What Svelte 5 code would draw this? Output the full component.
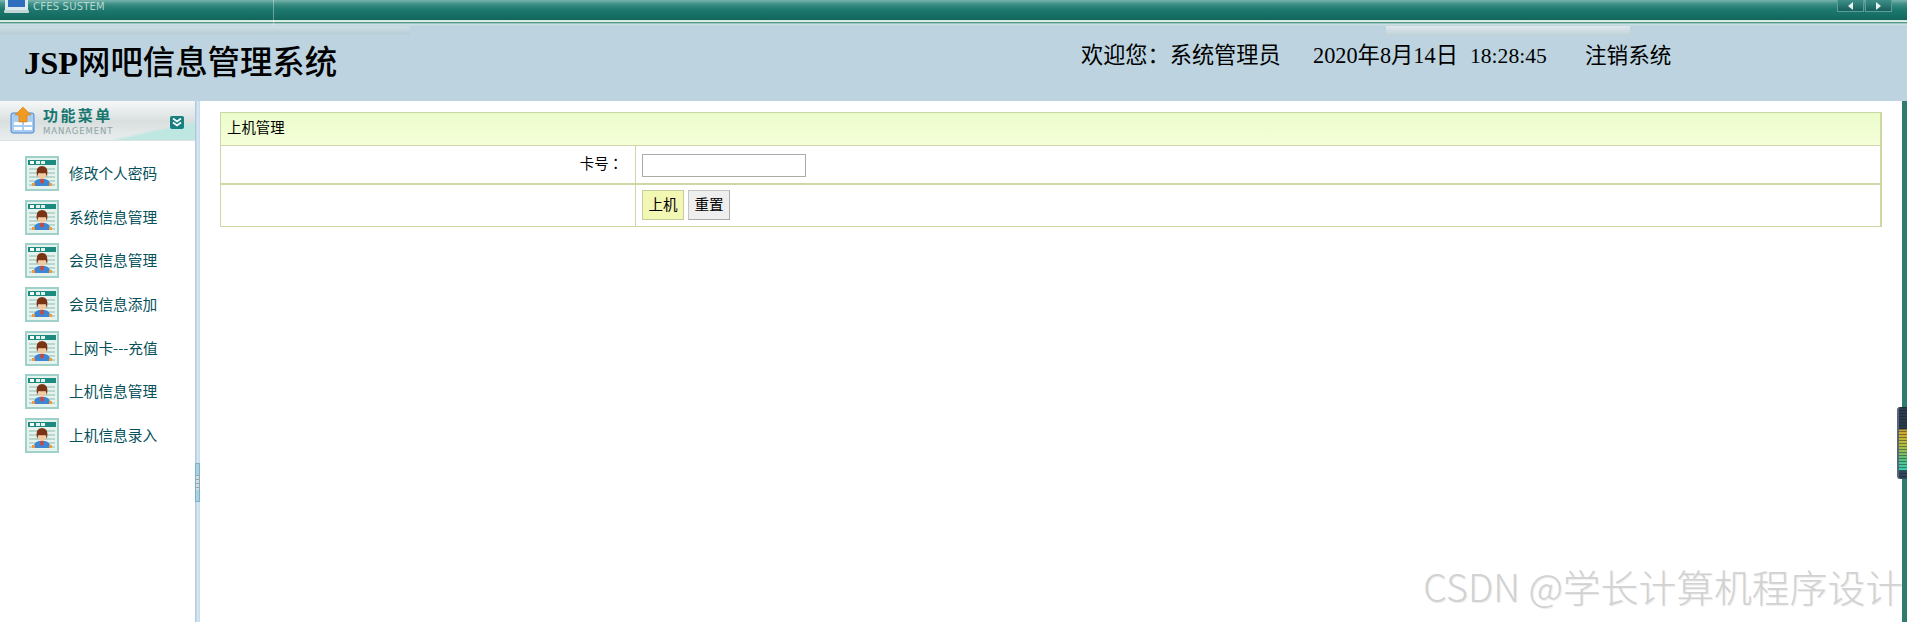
<script>
  const menu = ['修改个人密码', '系统信息管理', '会员信息管理', '会员信息添加', '上网卡---充值', '上机信息管理', '上机信息录入'];
</script>

<div class="page">
  <div class="topbar">
    <svg class="monitor" width="26" height="14" viewBox="0 0 26 14">
      <rect x="1" y="-8" width="23" height="18" fill="#dbe9ec" />
      <rect x="4" y="-6" width="17" height="13" fill="#2f6fc0" />
      <rect x="0" y="10" width="25" height="3" rx="1" fill="#c3d6d8" />
    </svg>
    <span class="sys">CFES SUSTEM</span>
    <i class="vline"></i>
    <div class="arrows">
      <span class="arrow"><b class="left"></b></span>
      <span class="arrow"><b class="right"></b></span>
    </div>
  </div>
  <div class="stripes"></div>

  <header>
    <i class="glare-left"></i>
    <h1><b>JSP</b>网吧信息管理系统</h1>
    <i class="glare"></i>
    <div class="info">
      <span class="welcome">欢迎您：系统管理员</span>
      <span class="date">2020年8月14日</span>
      <span class="time">18:28:45</span>
      <span class="logout">注销系统</span>
    </div>
  </header>

  <div class="body">
    <aside>
      <div class="side-head">
        <svg width="25" height="28" viewBox="0 0 25 28">
          <rect x="1" y="6" width="23" height="20" rx="2" fill="#a9cdf0" stroke="#4a86d0" />
          <rect x="4" y="15" width="8" height="3" fill="#fff" />
          <rect x="14" y="15" width="8" height="3" fill="#fff" />
          <rect x="4" y="20" width="8" height="3" fill="#fff" />
          <rect x="14" y="20" width="8" height="3" fill="#fff" />
          <path d="M13 0 L21 8 H17 V15 H9 V8 H5 Z" fill="#f09a22" stroke="#d97a10" stroke-width=".6" />
        </svg>
        <div class="side-title">
          <strong>功能菜单</strong>
          <span>MANAGEMENT</span>
        </div>
        <svg class="collapse" width="14" height="13" viewBox="0 0 14 13">
          <rect width="14" height="13" rx="2" fill="#167f80" />
          <path d="M3 2.5 L7 5.5 L11 2.5 M3 6.5 L7 9.5 L11 6.5" fill="none" stroke="#fff" stroke-width="1.6" />
        </svg>
      </div>
      <ul>
        {#each menu as item}
          <li>
            <svg width="34" height="35" viewBox="0 0 34 35">
              <rect x="1" y="1" width="32" height="33" fill="#e6f2ee" stroke="#a0d0ca" stroke-width="2" />
              <rect x="3" y="4" width="28" height="5" fill="#1d8a80" />
              <rect x="5" y="5" width="4" height="3" fill="#fff" />
              <rect x="11" y="5" width="4" height="3" fill="#e4f2ef" />
              <rect x="16" y="5" width="4" height="3" fill="#e4f2ef" />
              <path d="M4 13 H30 M4 17 H30 M4 21 H30 M4 25 H30 M4 29 H30" stroke="#a9d0c4" stroke-width="1.5" />
              <path d="M8 30 Q9 24 14 23 H20 Q25 24 26 30 Z" fill="#3c86d4" />
              <rect x="7" y="27" width="3" height="3" fill="#ef9a3c" />
              <rect x="24" y="27" width="3" height="3" fill="#ef9a3c" />
              <path d="M16 22 L18 22 L19 26 L17 28 L15 26 Z" fill="#d0453a" />
              <ellipse cx="17" cy="19" rx="3.8" ry="4" fill="#f3c9a0" />
              <path d="M12 21 Q10 10 17 10 Q24 10 22 21 L20.5 17 Q17 17.5 13.5 17 Z" fill="#7a3315" />
            </svg>
            <span>{item}</span>
          </li>
        {/each}
      </ul>
    </aside>

    <div class="splitter"><i></i></div>

    <main>
      <div class="panel">
        <div class="panel-title">上机管理</div>
        <div class="row first">
          <label class="cell-left" for="card">卡号：</label>
          <div class="cell-right"><input id="card" type="text" /></div>
        </div>
        <div class="row second">
          <div class="cell-left"></div>
          <div class="cell-right">
            <button class="primary">上机</button>
            <button>重置</button>
          </div>
        </div>
      </div>
    </main>

    <div class="edge"></div>
  </div>

  <div class="widget"></div>
  <div class="watermark">CSDN @学长计算机程序设计</div>
</div>

<style>
  :global(body) {
    margin: 0;
    background: #fff;
    overflow: hidden;
  }

  .page {
    position: relative;
    height: 622px;
    display: flex;
    flex-direction: column;
    font-family: "Liberation Serif", "Noto Sans CJK SC", serif;
    overflow: hidden;
  }

  .topbar {
    position: relative;
    height: 20px;
    display: flex;
    align-items: flex-start;
    background: linear-gradient(#79b5ae 0, #3f8f86 4px, #1f7a70 9px, #11665b 20px);
  }

  .monitor {
    margin-left: 4px;
  }

  .sys {
    margin-left: 3px;
    font: 10px/13px "DejaVu Sans", sans-serif;
    letter-spacing: 0.2px;
    color: #b5d8d0;
  }

  .vline {
    position: absolute;
    left: 273px;
    top: 0;
    width: 1px;
    height: 26px;
    background: rgba(255, 255, 255, 0.35);
  }

  .arrows {
    position: absolute;
    right: 15px;
    top: 0;
    display: flex;
    gap: 1px;
    height: 12px;
  }

  .arrow {
    width: 27px;
    display: flex;
    align-items: center;
    justify-content: center;
    background: linear-gradient(#3f8f88, #175f5c);
    border: 1px solid #5b9f97;
    border-top: 0;
    box-sizing: border-box;
  }

  .arrow b {
    width: 0;
    height: 0;
    border-top: 4px solid transparent;
    border-bottom: 4px solid transparent;
  }

  .left {
    border-right: 5px solid #e6f2f0;
  }

  .right {
    border-left: 5px solid #e6f2f0;
  }

  .stripes {
    height: 6px;
    background: linear-gradient(#cfe6dc 0, #e4f1e8 2px, #3e8a80 2px, #6ea79f 3px, #d0e2e2 4px, #bdd4e0 6px);
  }

  header {
    position: relative;
    height: 75px;
    flex: none;
    background: #bdd4e0;
  }

  .glare-left {
    position: absolute;
    left: 0;
    top: 0;
    width: 410px;
    height: 9px;
    background: linear-gradient(#cddde5, #b9cdd6 90%, #bdd4e0);
  }

  h1 {
    position: absolute;
    left: 24px;
    top: 17px;
    margin: 0;
    font-size: 32.4px;
    line-height: 40px;
    font-weight: 500;
    color: #000;
    white-space: nowrap;
  }

  .glare {
    position: absolute;
    left: 1386px;
    top: 0;
    width: 244px;
    height: 10px;
    background: linear-gradient(#dfe8ec, #bdd0d8);
  }

  .info {
    position: absolute;
    left: 0;
    top: 16px;
    width: 100%;
    height: 28px;
    font-size: 21.6px;
    line-height: 28px;
    color: #000;
  }

  .info span {
    position: absolute;
    white-space: nowrap;
  }

  .welcome { left: 1081px; font-size: 22.2px; }
  .date { left: 1313px; font-size: 22.3px; }
  .time { left: 1470px; font-size: 21.6px; }
  .logout { left: 1585px; }

  .body {
    flex: 1;
    display: flex;
    min-height: 0;
  }

  aside {
    width: 195px;
    flex: none;
  }

  .side-head {
    height: 39px;
    display: flex;
    align-items: center;
    padding-left: 10px;
    border-bottom: 1px solid #dde3e3;
    background:
      linear-gradient(167.6deg, transparent 76%, #bfe7e1 80%),
      linear-gradient(#f7f8f8, #d9dfdf 52%, #e9eded);
    position: relative;
  }

  .side-title {
    margin-left: 8px;
    display: flex;
    flex-direction: column;
  }

  .side-title strong {
    font: bold 15px/18px "Noto Sans CJK SC", sans-serif;
    letter-spacing: 2.4px;
    color: #17776f;
  }

  .side-title span {
    margin-top: 3px;
    font: 8.5px/9px "DejaVu Sans", sans-serif;
    letter-spacing: 0.9px;
    color: #8fa3a3;
  }

  .collapse {
    position: absolute;
    left: 170px;
    top: 15px;
  }

  ul {
    list-style: none;
    margin: 0;
    padding: 15px 0 0 25px;
  }

  li {
    height: 43.7px;
    display: flex;
    align-items: flex-start;
    gap: 10px;
  }

  li span {
    font: 14.7px/34px "Noto Sans CJK SC", sans-serif;
    color: #05505a;
  }

  .splitter {
    position: relative;
    width: 5px;
    flex: none;
    background: linear-gradient(90deg, #a9c2d4, #d6e7f3 50%, #c4dcec);
  }

  .splitter i {
    position: absolute;
    left: 0;
    top: 362px;
    width: 5px;
    height: 39px;
    box-sizing: border-box;
    border: 1px solid #7fb0c4;
    background:
      repeating-linear-gradient(#9aa8ac 0 1px, #d4dcde 1px 4px) center / 100% 15px no-repeat,
      #a6d2e4;
  }

  main {
    flex: 1;
    min-width: 0;
    padding: 11px 20px 0 20px;
  }

  .panel {
    border: 1px solid #cdd8a6;
    border-width: 1px 2px 1px 1px;
    font: 13.4px "Noto Sans CJK SC", sans-serif;
    color: #000;
  }

  .panel-title {
    height: 32px;
    padding-left: 6px;
    font-size: 14.4px;
    line-height: 28px;
    background: linear-gradient(#ebfccb, #f5fed9);
    border-bottom: 1px solid #cdd8a6;
  }

  .row {
    display: flex;
  }

  .row.first {
    height: 37px;
    border-bottom: 2px solid #cdd8a6;
  }

  .row.second {
    height: 41px;
  }

  .cell-left {
    width: 415px;
    flex: none;
    padding-right: 12px;
    box-sizing: border-box;
    text-align: right;
    font-size: 14.4px;
    line-height: 33px;
    font-family: "Noto Sans CJK TC", sans-serif;
    border-right: 1px solid #cdd8a6;
  }

  .cell-right {
    flex: 1;
    padding: 5px 0 0 6px;
    display: flex;
    gap: 4px;
  }

  input {
    width: 164px;
    height: 23px;
    box-sizing: border-box;
    margin: 3px 0 0;
    border: 1.4px solid #ababab;
    background: #fff;
    padding: 0;
  }

  button {
    width: 42px;
    height: 30px;
    padding: 0 0 4px;
    box-sizing: border-box;
    border: 1px solid #c4c4c4;
    border-bottom-color: #aaa;
    border-right-color: #aaa;
    background: #eeeeee;
    font: 14.6px "Noto Sans CJK SC", sans-serif;
    color: #000;
  }

  button.primary {
    background: #f3f7b4;
    border-color: #c8cc9a;
  }

  .edge {
    width: 5px;
    flex: none;
    background: #2f7d6e;
  }

  .widget {
    position: absolute;
    right: 0;
    top: 407px;
    width: 10px;
    height: 72px;
    box-sizing: border-box;
    border-radius: 3px 0 0 3px;
    border-left: 2px solid #59657a;
    background:
      repeating-linear-gradient(rgba(20, 30, 40, 0.45) 0 1px, transparent 1px 3px),
      linear-gradient(#2a3c4c 0, #2a3c4c 22px, #d4a52a 23px, #b8c03a 38px, #58c080 52px, #38d0b0 63px, #34465a 64px);
  }

  .watermark {
    position: absolute;
    right: 4px;
    top: 563px;
    font: 300 37.8px/46px "Noto Sans CJK SC", sans-serif;
    color: #d2d2d2;
    white-space: nowrap;
    text-shadow: 1px 1px 1px rgba(0, 0, 0, 0.08);
  }
</style>
